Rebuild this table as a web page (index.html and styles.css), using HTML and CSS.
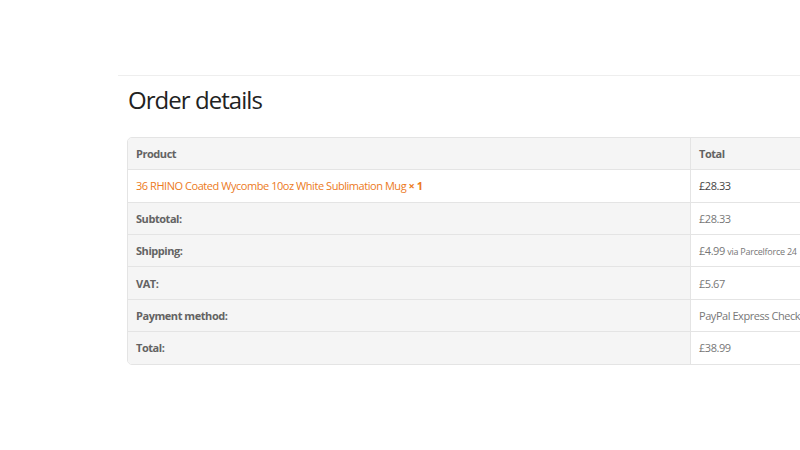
FILE: index.html
```html
<!DOCTYPE html>
<html lang="en">
<head>
  <meta charset="UTF-8">
  <title>Order details</title>
  <link rel="stylesheet" href="styles.css">
</head>
<body>

<div class="order-wrap">
  <h2>Order details</h2>

  <table class="order-details">
    <thead>
      <tr>
        <th class="product-name">Product</th>
        <th class="product-total">Total</th>
      </tr>
    </thead>
    <tbody>
      <tr>
        <td class="product-name"><a href="#">36 RHINO Coated Wycombe 10oz White Sublimation Mug</a> <strong class="qty">&times; 1</strong></td>
        <td class="product-total">£28.33</td>
      </tr>
    </tbody>
    <tfoot>
      <tr>
        <th>Subtotal:</th>
        <td>£28.33</td>
      </tr>
      <tr>
        <th>Shipping:</th>
        <td>£4.99 <small>via Parcelforce 24</small></td>
      </tr>
      <tr>
        <th>VAT:</th>
        <td>£5.67</td>
      </tr>
      <tr>
        <th>Payment method:</th>
        <td>PayPal Express Checkout</td>
      </tr>
      <tr>
        <th>Total:</th>
        <td>£38.99</td>
      </tr>
    </tfoot>
  </table>
</div>

</body>
</html>
```

FILE: styles.css
```css
html, body { margin: 0; padding: 0; }
body {
  font-family: "Open Sans", "Liberation Sans", sans-serif;
  background-color: #fff;
  color: #777;
  overflow: hidden;
  width: 800px;
  height: 450px;
}

.order-wrap {
  margin: 75px 0 0 118px;
  padding: 0 0 0 9px;
  border-top: 1px solid #eee;
  width: 800px;
}

h2 {
  font-size: 24px;
  font-weight: 400;
  color: #222;
  letter-spacing: -0.95px;
  margin: 8px 0 22px 1px;
  line-height: 1.3;
}

table.order-details {
  width: 760px;
  border: 1px solid #e4e4e4;
  border-radius: 5px;
  border-collapse: separate;
  border-spacing: 0;
  font-size: 11px;
  letter-spacing: -0.45px;
  overflow: hidden;
}
.order-details th, .order-details td {
  text-align: left;
  padding: 0 8px;
  height: 31.4px;
  border-top: 1px solid #e4e4e4;
}
.order-details thead th { border-top: none; background-color: #f5f5f5; height: 31px; }
.order-details th { font-weight: 700; color: #636363; }
.order-details th.product-total, .order-details .product-total,
.order-details tfoot td { border-left: 1px solid #e4e4e4; }
.order-details tfoot th { background-color: #f5f5f5; }
.order-details td { color: #777; }
.order-details td.product-name, .order-details td.product-total { color: #444; }
.order-details .product-name { width: 546px; }

.order-details a { color: #ec7a1c; text-decoration: none; }
.order-details .qty { color: #ec7a1c; }
.order-details small { font-size: 9px; letter-spacing: -0.25px; }
```
